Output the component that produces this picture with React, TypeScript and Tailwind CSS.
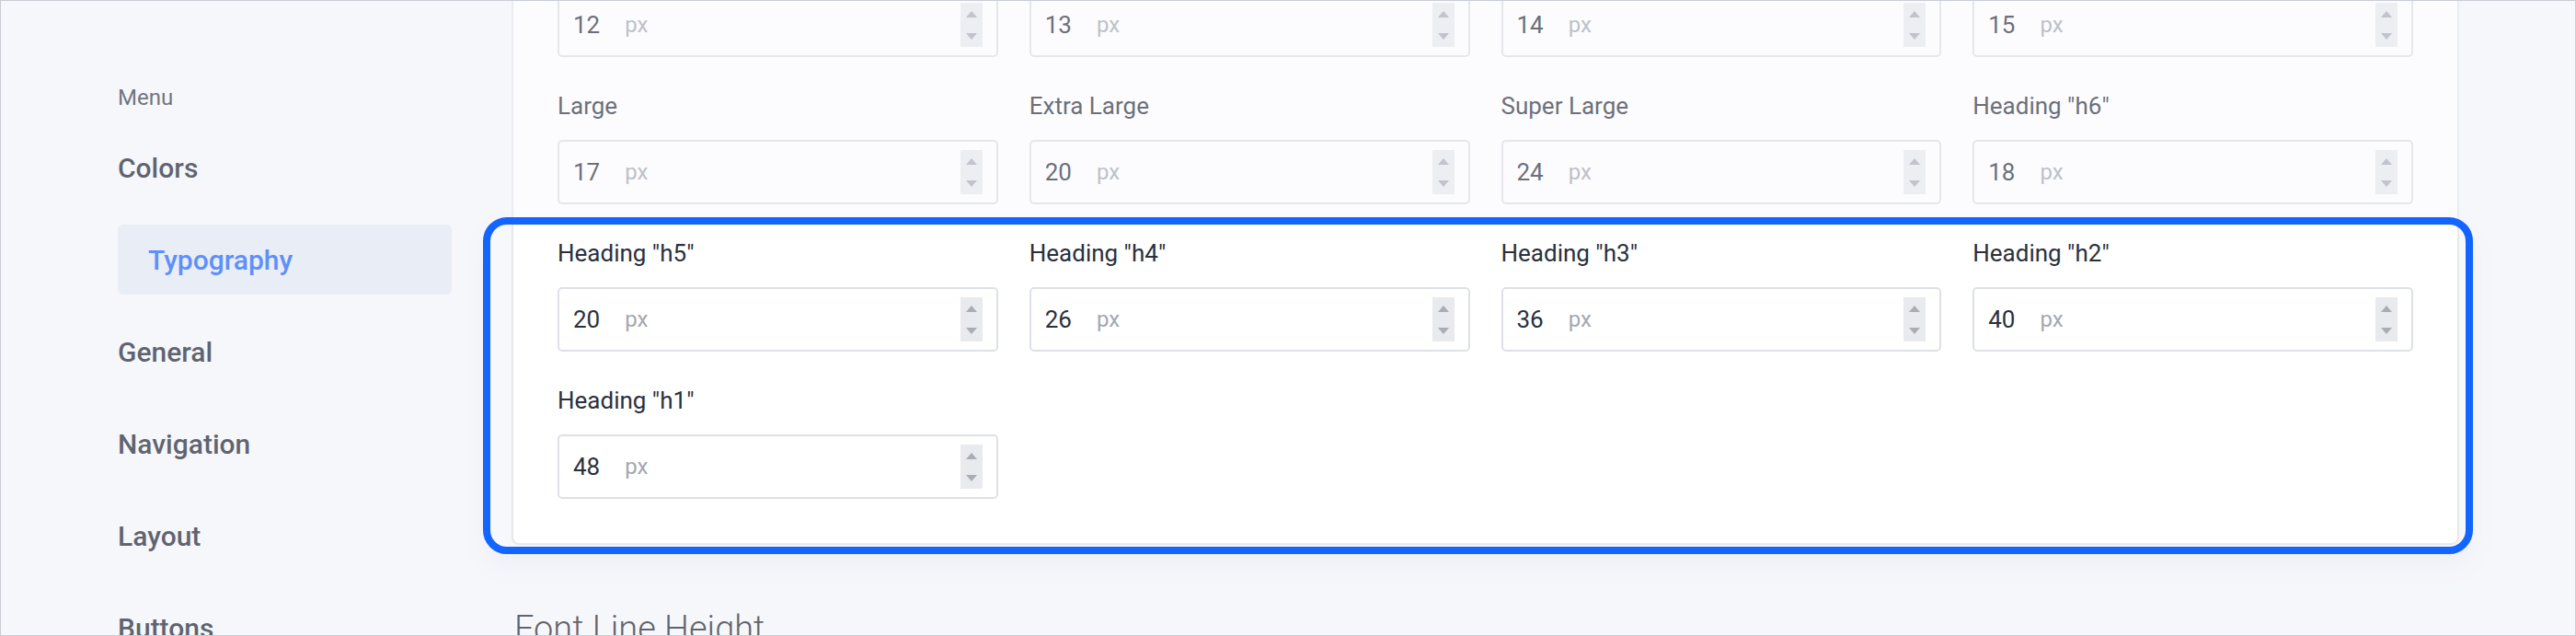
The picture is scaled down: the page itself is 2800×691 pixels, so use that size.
import { ReactNode } from 'react';

type Field = { label: string; value: number };

const FIELDS: Field[] = [
  { label: 'Extra Small', value: 12 },
  { label: 'Small', value: 13 },
  { label: 'Normal', value: 14 },
  { label: 'Medium', value: 15 },
  { label: 'Large', value: 17 },
  { label: 'Extra Large', value: 20 },
  { label: 'Super Large', value: 24 },
  { label: 'Heading "h6"', value: 18 },
  { label: 'Heading "h5"', value: 20 },
  { label: 'Heading "h4"', value: 26 },
  { label: 'Heading "h3"', value: 36 },
  { label: 'Heading "h2"', value: 40 },
  { label: 'Heading "h1"', value: 48 },
];

const MENU = ['Colors', 'Typography', 'General', 'Navigation', 'Layout', 'Buttons'];

function Spinner() {
  return (
    <div className="flex h-[48px] w-[24px] flex-col items-center justify-around bg-[#e9eaed]">
      <svg width="12" height="7" viewBox="0 0 12 7">
        <path d="M6 0 L12 7 L0 7 Z" fill="#a9adb5" />
      </svg>
      <svg width="12" height="7" viewBox="0 0 12 7">
        <path d="M0 0 L12 0 L6 7 Z" fill="#a9adb5" />
      </svg>
    </div>
  );
}

function SizeInput({ label, value }: Field) {
  return (
    <div className="flex flex-col">
      <label className="text-[26px] leading-[30px] text-[#2b303b]">{label}</label>
      <div className="mt-[22px] flex h-[70px] items-center rounded-[5px] border-2 border-[#dde1e6] bg-white pl-[15px] pr-[15px]">
        <span className="text-[26px] text-[#2b303b]">{value}</span>
        <span className="ml-[27px] text-[24px] text-[#a3a8b0]">px</span>
        <div className="flex-1" />
        <Spinner />
      </div>
    </div>
  );
}

function NavItem({ children, active }: { children: ReactNode; active?: boolean }) {
  return (
    <div
      className={
        active
          ? 'flex h-[76px] items-center rounded-[6px] bg-[#e3e9f2] px-[33px] text-[30px] font-medium text-[#1461fa]'
          : 'flex h-[76px] items-center text-[30px] font-medium text-[#18202e]'
      }
    >
      {children}
    </div>
  );
}

export default function App() {
  return (
    <div
      className="relative flex h-[691px] w-[2800px] overflow-hidden border border-[#c9cdd4] bg-[#f7f8fb] pl-[127px] pr-[126px]"
      style={{ fontFamily: 'Roboto, "Noto Sans", sans-serif' }}
    >
      {/* sidebar */}
      <aside className="w-[363px] shrink-0 pt-[91px]">
        <div className="text-[24px] leading-[28px] text-[#303846]">Menu</div>
        <nav className="mt-[24px] flex flex-col gap-[24px]">
          {MENU.map((m) => (
            <NavItem key={m} active={m === 'Typography'}>
              {m}
            </NavItem>
          ))}
        </nav>
      </aside>

      {/* main column, scrolled */}
      <main className="ml-[65px] flex min-w-0 flex-1 flex-col -mt-[111px]">
        <section className="rounded-[8px] border-2 border-[#e6e8ec] bg-white p-[48px]">
          <div className="grid grid-cols-4 gap-x-[34px] gap-y-[38px]">
            {FIELDS.map((f) => (
              <SizeInput key={f.label} {...f} />
            ))}
          </div>
        </section>
        <h2 className="mt-[72px] pl-[3px] text-[38px] font-light leading-[38px] text-[#1a202a]">
          Font Line Height
        </h2>
      </main>

      {/* tour spotlight */}
      <div className="pointer-events-none absolute left-[524px] top-[235px] h-[366px] w-[2163px] rounded-[26px] border-[8px] border-[#1464ff] shadow-[0_0_0_4000px_rgba(246,247,251,0.32),0_14px_28px_rgba(30,40,70,0.05)]" />
    </div>
  );
}
